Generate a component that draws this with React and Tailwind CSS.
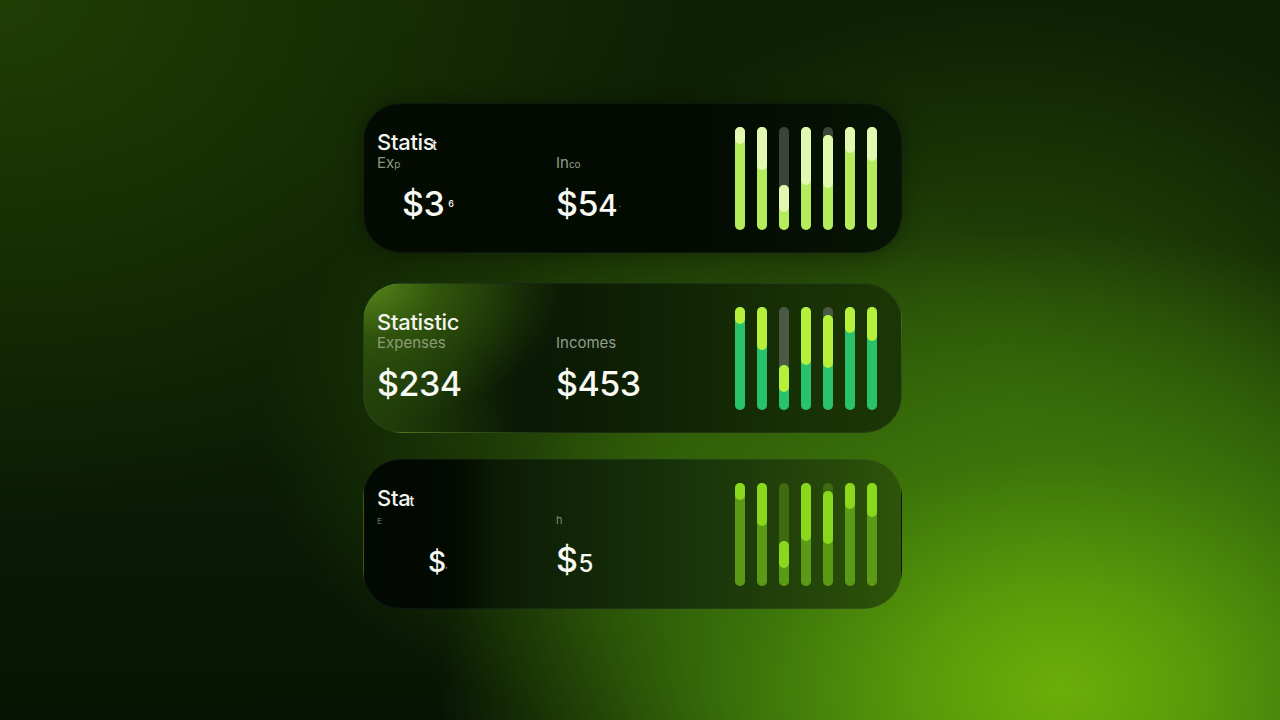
import React from 'react';

// bar data: fill height (px of 103) and top segment length (px)
const BARS = [
	{ fill: 103, top: 17 },
	{ fill: 103, top: 43 },
	{ fill: 45, top: 27 },
	{ fill: 103, top: 58 },
	{ fill: 95, top: 53 },
	{ fill: 103, top: 26 },
	{ fill: 103, top: 34 },
];

const THEMES = {
	pale: { track: 'bg-[#3b4537]', low: 'bg-[#b4ec5c]', high: 'bg-[#e2f8b0]' },
	green: { track: 'bg-[#4b5944]', low: 'bg-[#27c26a]', high: 'bg-[#b6f03a]' },
	olive: { track: 'bg-[#3f6a10]', low: 'bg-[#5b9a14]', high: 'bg-[#8ad81c]' },
};

const Bars = ({ theme }) => {
	const t = THEMES[theme];
	return (
		<div className="ml-auto flex gap-[12px] h-[103px]">
			{BARS.map((b, i) => (
				<div
					key={i}
					className={`w-[10px] h-full rounded-full flex flex-col justify-end ${t.track}`}
				>
					<div
						className={`w-full rounded-full flex flex-col ${t.low}`}
						style={{ height: b.fill }}
					>
						<div
							className={`w-full rounded-full ${t.high}`}
							style={{ height: b.top }}
						/>
					</div>
				</div>
			))}
		</div>
	);
};

const Card = ({ className, title, expLabel, expValue, incLabel, incValue, theme }) => (
	<div
		className={`w-[539px] h-[150px] rounded-[38px] pl-[13px] pr-[24px] flex items-center ${className}`}
	>
		<div className="self-start pt-[26px] flex flex-col">
			<div className="text-[22px] leading-[24px] font-medium text-[#f2f5ee] tracking-[-0.3px] h-[24px]">
				{title}
			</div>
			<div className="flex">
				<div className="w-[179px] flex flex-col">
					<div className="text-[15px] leading-[18px] h-[18px] text-[#8a9880]">
						{expLabel}
					</div>
					<div className="mt-[12px] text-[34px] leading-[40px] h-[40px] font-medium text-[#f7f9f2] tracking-[-0.5px]">
						{expValue}
					</div>
				</div>
				<div className="flex flex-col">
					<div className="text-[15px] leading-[18px] h-[18px] text-[#939d8e]">
						{incLabel}
					</div>
					<div className="mt-[12px] text-[34px] leading-[40px] h-[40px] font-medium text-[#f7f9f2] tracking-[-0.5px]">
						{incValue}
					</div>
				</div>
			</div>
		</div>
		<Bars theme={theme} />
	</div>
);

export default function App() {
	return (
		<div
			className="w-[1280px] h-[720px] overflow-hidden bg-[radial-gradient(ellipse_620px_460px_at_1060px_690px,#6cae08_0%,#5a9a0a_22%,#3c740a_50%,transparent_100%),radial-gradient(ellipse_520px_420px_at_1000px_420px,#2c5608_0%,transparent_100%),radial-gradient(ellipse_420px_300px_at_680px_430px,#2c5408_0%,transparent_100%),radial-gradient(ellipse_700px_520px_at_0px_0px,#1f3e04_0%,transparent_100%),linear-gradient(180deg,#0e2004_0%,#0b1c04_60%,#071403_100%)]"
			style={{ fontFamily: 'Inter, "Noto Sans", sans-serif' }}
		>
			<div className="flex justify-center pt-[103px]">
				<div className="mr-[15px] flex flex-col">
					<Card
						theme="pale"
						className="bg-[linear-gradient(90deg,#030b02_0%,#030a02_60%,#071405_100%)] border border-[#ffffff0d] shadow-[0_0_20px_rgba(0,0,0,0.35)]"
						title={
							<>
								Statis
								<span className="text-[13px] -ml-[2px]">t</span>
							</>
						}
						expLabel={
							<>
								Ex<span className="text-[10px]">p</span>
							</>
						}
						expValue={
							<span className="ml-[25px]">
								$3<span className="text-[9px] align-top ml-[4px]">6</span>
							</span>
						}
						incLabel={
							<>
								In<span className="text-[10px]">co</span>
							</>
						}
						incValue={
							<>
								$5<span className="text-[30px]">4</span>
								<span className="text-[6px] align-middle ml-[2px]">·</span>
							</>
						}
					/>
					<Card
						theme="green"
						className="mt-[30px] bg-[radial-gradient(ellipse_200px_140px_at_0%_0%,#56861a_0%,#30540c_38%,transparent_100%),radial-gradient(ellipse_150px_120px_at_0%_100%,#22400a_0%,transparent_100%),linear-gradient(90deg,#142c08_0%,#0a1804_30%,#0e2004_50%,#173006_80%,#1b3606_100%)] border border-[#ffffff10]"
						title="Statistic"
						expLabel={<span className="text-[#8d9c78]">Expenses</span>}
						expValue="$234"
						incLabel="Incomes"
						incValue="$453"
					/>
					<Card
						theme="olive"
						className="mt-[26px] bg-[linear-gradient(90deg,#020802_0%,#030a02_17%,#0c1c04_25%,#16300a_55%,#22420a_80%,#2d5409_100%)] border border-[#ffffff0d]"
						title={
							<>
								Sta<span className="text-[14px] -ml-[1px]">t</span>
							</>
						}
						expLabel={<span className="text-[8px] text-[#6a7560]">E</span>}
						expValue={
							<span className="ml-[51px] text-[28px]">
								$<span className="text-[6px]">'</span>
							</span>
						}
						incLabel={<span className="text-[11px] text-[#7d8a6c]">h</span>}
						incValue={
							<>
								$<span className="text-[24px] ml-[1px]">5</span>
							</>
						}
					/>
				</div>
			</div>
		</div>
	);
}
